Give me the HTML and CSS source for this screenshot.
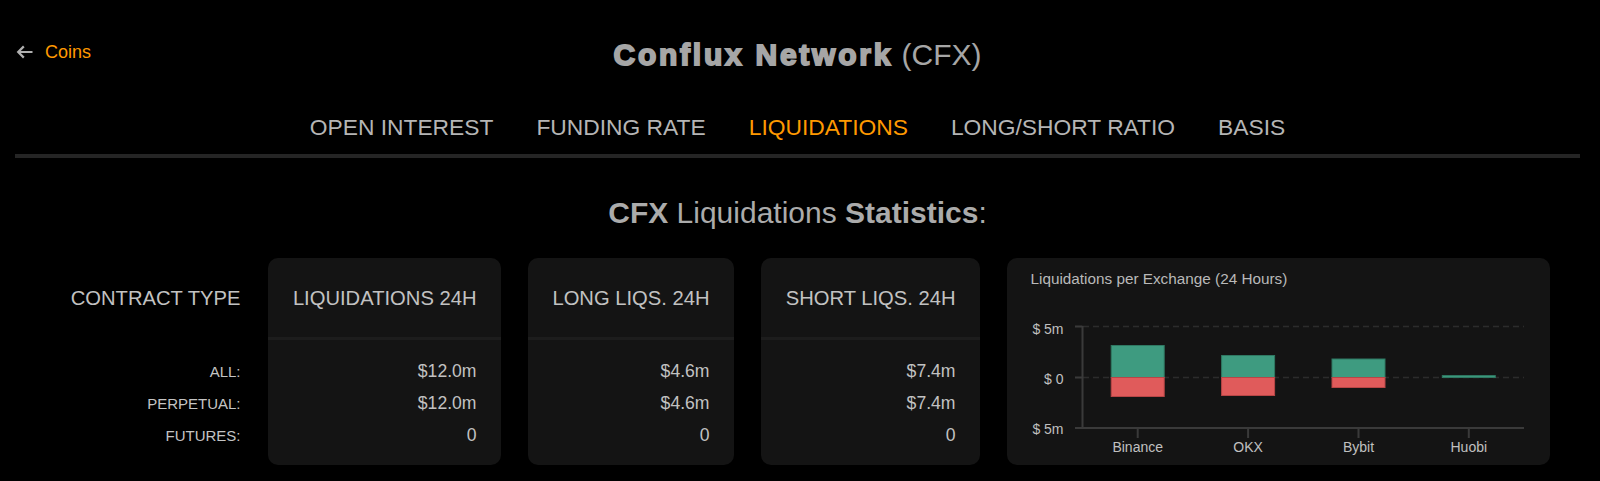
FILE: index.html
```html
<!DOCTYPE html>
<html lang="en">
<head>
<meta charset="utf-8">
<title>Conflux Network (CFX) Liquidations</title>
<link rel="stylesheet" href="styles.css">
</head>
<body>
<div class="page">
  <header class="top">
    <a class="back" href="#">
      <svg class="back-icon" width="17" height="14" viewBox="0 0 17 14" aria-hidden="true">
        <path d="M16.5 7H2.4M7.8 1.4L2.2 7l5.6 5.6" fill="none" stroke="#b0b0b0" stroke-width="2.2"/>
      </svg>
      <span>Coins</span>
    </a>
    <h1 class="title"><strong>Conflux Network</strong> (CFX)</h1>
    <div></div>
  </header>

  <nav class="tabs">
    <a class="tab" href="#">OPEN INTEREST</a>
    <a class="tab" href="#">FUNDING RATE</a>
    <a class="tab active" href="#">LIQUIDATIONS</a>
    <a class="tab" href="#">LONG/SHORT RATIO</a>
    <a class="tab" href="#">BASIS</a>
  </nav>

  <h2 class="section-title"><strong>CFX</strong> Liquidations <strong>Statistics</strong>:</h2>

  <div class="stats">
    <div class="labels">
      <div class="head">CONTRACT TYPE</div>
      <div class="body">
        <div class="row">ALL:</div>
        <div class="row">PERPETUAL:</div>
        <div class="row">FUTURES:</div>
      </div>
    </div>

    <div class="card card-total">
      <div class="head">LIQUIDATIONS 24H</div>
      <div class="body">
        <div class="row">$12.0m</div>
        <div class="row">$12.0m</div>
        <div class="row">0</div>
      </div>
    </div>

    <div class="card card-long">
      <div class="head">LONG LIQS. 24H</div>
      <div class="body">
        <div class="row">$4.6m</div>
        <div class="row">$4.6m</div>
        <div class="row">0</div>
      </div>
    </div>

    <div class="card card-short">
      <div class="head">SHORT LIQS. 24H</div>
      <div class="body">
        <div class="row">$7.4m</div>
        <div class="row">$7.4m</div>
        <div class="row">0</div>
      </div>
    </div>

    <div class="chart-card">
      <div class="chart-title">Liquidations per Exchange (24 Hours)</div>
      <svg class="chart-svg" width="543" height="177" viewBox="0 0 543 177">
        <g class="grid">
          <line x1="76" y1="38.5" x2="517" y2="38.5"/>
          <line x1="76" y1="89.5" x2="517" y2="89.5"/>
        </g>
        <g class="bars">
          <rect class="long" x="104.2" y="57.5" width="53" height="32"/>
          <rect class="short" x="104.2" y="89.5" width="53" height="19"/>
          <rect class="long" x="214.6" y="67.5" width="53" height="22"/>
          <rect class="short" x="214.6" y="89.5" width="53" height="18"/>
          <rect class="long" x="325" y="71" width="53" height="18.5"/>
          <rect class="short" x="325" y="89.5" width="53" height="10"/>
          <rect class="long" x="435.3" y="87.6" width="53" height="1.9"/>
        </g>
        <g class="axis">
          <line x1="75.5" y1="38" x2="75.5" y2="141"/>
          <line x1="68" y1="140" x2="517" y2="140"/>
          <line x1="68" y1="38.5" x2="75.5" y2="38.5"/>
          <line x1="68" y1="89.5" x2="75.5" y2="89.5"/>
          <line x1="130.7" y1="140" x2="130.7" y2="150"/>
          <line x1="241.1" y1="140" x2="241.1" y2="150"/>
          <line x1="351.5" y1="140" x2="351.5" y2="150"/>
          <line x1="461.8" y1="140" x2="461.8" y2="150"/>
        </g>
        <g class="ylabels">
          <text x="56.5" y="46">$ 5m</text>
          <text x="56.5" y="95.5">$ 0</text>
          <text x="56.5" y="146">$ 5m</text>
        </g>
        <g class="xlabels">
          <text x="130.7" y="164">Binance</text>
          <text x="241.1" y="164">OKX</text>
          <text x="351.5" y="164">Bybit</text>
          <text x="461.8" y="164">Huobi</text>
        </g>
      </svg>
    </div>
  </div>
</div>
</body>
</html>
```

FILE: styles.css
```css
html, body {
  margin: 0;
  padding: 0;
  background: #000;
}

body {
  width: 1600px;
  height: 481px;
  overflow: hidden;
  font-family: "Liberation Sans", Arial, sans-serif;
  color: #bdbdbd;
}

.page {
  padding: 0 20px 0 15px;
}

/* Header */
.top {
  display: grid;
  grid-template-columns: 1fr auto 1fr;
  align-items: start;
  padding-top: 37px;
}

.back {
  justify-self: start;
  display: inline-flex;
  align-items: center;
  gap: 12px;
  margin-top: 4px;
  padding-left: 1px;
  color: #ff9900;
  text-decoration: none;
  font-size: 18px;
  line-height: 22px;
}

.back-icon {
  display: block;
}

.title {
  margin: 0;
  font-size: 30px;
  line-height: 36px;
  font-weight: normal;
  color: #a6a6a6;
  white-space: nowrap;
}

.title strong {
  font-weight: 700;
  letter-spacing: 2.75px;
  -webkit-text-stroke: 1.8px #a6a6a6;
}

/* Tabs */
.tabs {
  display: flex;
  justify-content: center;
  gap: 43px;
  margin-top: 41px;
  padding-bottom: 13px;
  border-bottom: 4px solid #252525;
  font-size: 22.8px;
  line-height: 27px;
}

.tab {
  color: #b5b5b5;
  text-decoration: none;
  white-space: nowrap;
}

.tab.active {
  color: #ff9900;
}

/* Section title */
.section-title {
  margin: 37px 0 0;
  text-align: center;
  font-size: 30px;
  line-height: 36px;
  font-weight: normal;
  color: #ababab;
}

.section-title strong {
  font-weight: 700;
}

/* Stats row */
.stats {
  display: flex;
  justify-content: center;
  gap: 27px;
  margin-top: 27px;
}

.labels,
.card {
  display: flex;
  flex-direction: column;
  text-align: right;
  color: #c2c2c2;
}

.labels {
  width: 195px;
}

.card {
  background: #141414;
  border-radius: 10px;
  height: 207px;
  box-sizing: border-box;
}

.card-total { width: 233px; }
.card-long  { width: 206px; }
.card-short { width: 219px; }

.head {
  height: 79px;
  display: flex;
  align-items: center;
  justify-content: flex-end;
  font-size: 20.2px;
  line-height: 24px;
  white-space: nowrap;
  border-bottom: 3px solid transparent;
}

.card .head {
  padding: 0 24px;
  border-bottom-color: #1d1d1d;
}

.body {
  padding: 15px 0 14px;
}

.card .body {
  padding: 15px 24px 14px;
}

.row {
  height: 32px;
  line-height: 32px;
  font-size: 17.6px;
  white-space: nowrap;
}

.labels .body {
  padding-top: 16px;
}

.labels .row {
  font-size: 15px;
  color: #c4c4c4;
}

/* Chart card */
.chart-card {
  width: 543px;
  height: 207px;
  background: #141414;
  border-radius: 10px;
  overflow: hidden;
}

.chart-title {
  padding: 12px 24px 0;
  font-size: 15.3px;
  line-height: 18px;
  color: #b9b9b9;
  white-space: nowrap;
}

.chart-svg {
  display: block;
}

.chart-svg .grid line {
  stroke: #2c2c2c;
  stroke-width: 1.5;
  stroke-dasharray: 6 4;
}

.chart-svg .axis line {
  stroke: #3a3a3a;
  stroke-width: 2;
}

.chart-svg .bars rect {
  stroke-width: 1;
}

.chart-svg .bars .long {
  fill: #3e9b80;
  stroke: #2f7862;
}

.chart-svg .bars .short {
  fill: #e05b5b;
  stroke: #b84646;
}

.chart-svg text {
  font-family: "Liberation Sans", Arial, sans-serif;
  font-size: 14px;
  fill: #c0c0c0;
}

.chart-svg .ylabels text {
  text-anchor: end;
}

.chart-svg .xlabels text {
  text-anchor: middle;
}
```
